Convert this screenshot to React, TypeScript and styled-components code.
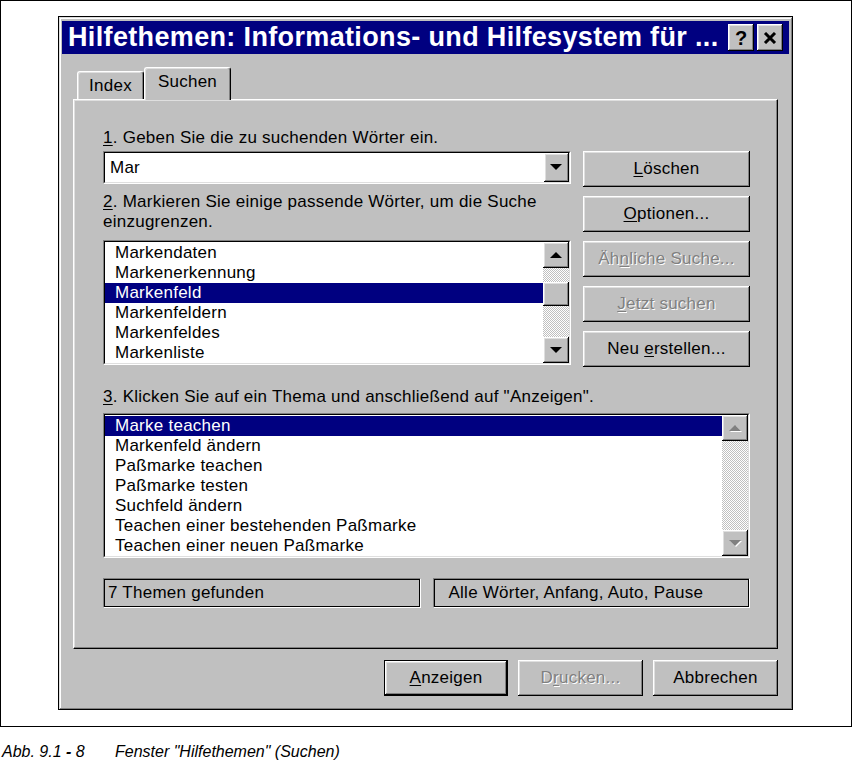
import React from "react";
import styled, { createGlobalStyle, css } from "styled-components";

const face = "#c0c0c0";

const GlobalStyle = createGlobalStyle`
  html, body {
    margin: 0;
    padding: 0;
    background: #fff;
  }
  body {
    font-family: "Liberation Sans", Arial, sans-serif;
    color: #000;
  }
`;

const raised = css`
  box-shadow: inset -1px -1px 0 #000, inset 1px 1px 0 #fff,
    inset -2px -2px 0 #808080, inset 2px 2px 0 #dfdfdf;
`;

const uiText = css`
  font-size: 17px;
  line-height: 20px;
  letter-spacing: 0.25px;
  white-space: nowrap;
`;

const Frame = styled.div`
  box-sizing: border-box;
  width: 852px;
  height: 727px;
  border: 1px solid #000;
  padding: 15px 0 0 57px;
`;

const Window = styled.div`
  box-sizing: border-box;
  width: 735px;
  height: 694px;
  background: ${face};
  border: 1px solid #000;
  box-shadow: inset 1px 1px 0 #dfdfdf, inset -1px -1px 0 #808080,
    inset 2px 2px 0 #fff;
  padding: 4px 3px 0 3px;
`;

const TitleBar = styled.div`
  height: 33px;
  background: #000080;
  color: #fff;
  display: flex;
  align-items: center;
  gap: 3px;
  padding: 0 6px;
`;

const TitleText = styled.div`
  flex: 1;
  font-size: 27px;
  font-weight: bold;
  letter-spacing: 0.35px;
  white-space: nowrap;
  overflow: hidden;
`;

const TitleButton = styled.div`
  box-sizing: border-box;
  width: 26px;
  height: 27px;
  background: ${face};
  ${raised};
  display: flex;
  align-items: center;
  justify-content: center;
  color: #000;
  font-size: 20px;
  font-weight: bold;
  padding-top: 1px;
`;

const Body = styled.div`
  padding: 13px 11px 0 11px;
`;

const TabStrip = styled.div`
  position: relative;
  z-index: 1;
  height: 32px;
  display: flex;
  align-items: flex-end;
  padding-left: 4px;
`;

const Tab = styled.div<{ $active?: boolean; $w: number }>`
  box-sizing: border-box;
  width: ${(p) => p.$w}px;
  height: ${(p) => (p.$active ? 33 : 28)}px;
  margin-bottom: ${(p) => (p.$active ? -1 : 0)}px;
  background: ${face};
  border-top: 1px solid #fff;
  border-left: 1px solid #fff;
  border-right: 1px solid #000;
  border-radius: 3px 3px 0 0;
  box-shadow: inset -1px 0 0 #808080, inset 1px 1px 0 #dfdfdf;
  padding-top: 4px;
  text-align: center;
  ${uiText};
`;

const Panel = styled.div`
  box-sizing: border-box;
  height: 550px;
  border: 1px solid;
  border-color: #fff #000 #000 #fff;
  box-shadow: inset -1px -1px 0 #808080, inset 1px 1px 0 #dfdfdf;
  padding: 28px 27px 0 29px;
`;

const TopSection = styled.div`
  display: grid;
  grid-template-columns: 468px 167px;
  column-gap: 12px;
  align-items: start;
`;

const Column = styled.div`
  display: flex;
  flex-direction: column;
`;

const ButtonColumn = styled.div`
  display: flex;
  flex-direction: column;
  gap: 9px;
  padding-top: 23px;
`;

const Label = styled.div<{ $mt?: number }>`
  ${uiText};
  white-space: normal;
  margin-top: ${(p) => p.$mt ?? 0}px;
`;

const Key = styled.span`
  text-decoration: underline;
  text-underline-offset: 2px;
`;

const Well = styled.div<{ $h: number; $mt?: number }>`
  box-sizing: border-box;
  height: ${(p) => p.$h}px;
  margin-top: ${(p) => p.$mt ?? 0}px;
  border: 1px solid;
  border-color: #808080 #fff #fff #808080;
`;

const WellInner = styled.div`
  box-sizing: border-box;
  height: 100%;
  border: 1px solid;
  border-color: #000 #dfdfdf #dfdfdf #000;
  background: #fff;
  display: flex;
`;

const ComboText = styled.div`
  flex: 1;
  padding-left: 5px;
  ${uiText};
  line-height: 29px;
`;

const DropButton = styled.div`
  box-sizing: border-box;
  width: 25px;
  background: ${face};
  ${raised};
  display: flex;
  align-items: center;
  justify-content: center;
`;

const Items = styled.div`
  flex: 1;
  padding-top: 1px;
  overflow: hidden;
`;

const Item = styled.div<{ $selected?: boolean }>`
  height: 20px;
  padding-left: 10px;
  ${uiText};
  ${(p) =>
    p.$selected &&
    css`
      background: #000080;
      color: #fff;
    `}
`;

const ScrollBar = styled.div`
  width: 26px;
  display: flex;
  flex-direction: column;
  background: repeating-conic-gradient(#c0c0c0 0 25%, #fff 0 50%) 0 0 / 2px
    2px;
`;

const ScrollButton = styled.div`
  box-sizing: border-box;
  height: 26px;
  background: ${face};
  ${raised};
  display: flex;
  align-items: center;
  justify-content: center;
`;

const Thumb = styled.div`
  box-sizing: border-box;
  height: 24px;
  margin-top: 14px;
  background: ${face};
  ${raised};
`;

const Track = styled.div`
  flex: 1;
`;

const Button = styled.div<{ $disabled?: boolean; $default?: boolean; $w?: number }>`
  box-sizing: border-box;
  height: 36px;
  width: ${(p) => (p.$w ? `${p.$w}px` : "auto")};
  background: ${face};
  ${raised};
  display: flex;
  align-items: center;
  justify-content: center;
  ${uiText};
  ${(p) =>
    p.$disabled &&
    css`
      color: #808080;
      text-shadow: 1px 1px 0 #fff;
    `}
  ${(p) =>
    p.$default &&
    css`
      border: 1px solid #000;
    `}
`;

const StatusRow = styled.div`
  display: grid;
  grid-template-columns: 1fr 1fr;
  column-gap: 12px;
  margin-top: 20px;
`;

const StatusBox = styled.div<{ $indent: number }>`
  box-sizing: border-box;
  height: 30px;
  border: 1px solid;
  border-color: #808080 #fff #fff #808080;
  box-shadow: inset 0 0 0 1px #000;
  padding-left: ${(p) => p.$indent}px;
  ${uiText};
  line-height: 28px;
`;

const Footer = styled.div`
  display: flex;
  justify-content: flex-end;
  gap: 10px;
  margin-top: 11px;
`;

const Caption = styled.div`
  display: flex;
  margin-top: 15px;
  padding-left: 2px;
  font-style: italic;
  font-size: 16px;
  line-height: 19px;
  white-space: nowrap;
`;

const CaptionNumber = styled.span`
  width: 113px;
`;

const Arrow: React.FC<{ dir: "up" | "down"; disabled?: boolean }> = ({ dir, disabled }) => {
  const pts = dir === "up" ? "0,6 12,6 6,0" : "0,0 12,0 6,6";
  return (
    <svg width="13" height="7" viewBox="0 0 13 7">
      {disabled && <polygon points={pts} fill="#fff" transform="translate(1,1)" />}
      <polygon points={pts} fill={disabled ? "#808080" : "#000"} />
    </svg>
  );
};

const CloseGlyph = () => (
  <svg width="14" height="12" viewBox="0 0 14 12">
    <path d="M2 1 L12 11 M12 1 L2 11" stroke="#000" strokeWidth="3" />
  </svg>
);

const words = [
  "Markendaten",
  "Markenerkennung",
  "Markenfeld",
  "Markenfeldern",
  "Markenfeldes",
  "Markenliste",
];

const topics = [
  "Marke teachen",
  "Markenfeld ändern",
  "Paßmarke teachen",
  "Paßmarke testen",
  "Suchfeld ändern",
  "Teachen einer bestehenden Paßmarke",
  "Teachen einer neuen Paßmarke",
];

export default function App() {
  return (
    <>
      <GlobalStyle />
      <Frame>
        <Window>
          <TitleBar>
            <TitleText>Hilfethemen: Informations- und Hilfesystem für ...</TitleText>
            <TitleButton>?</TitleButton>
            <TitleButton>
              <CloseGlyph />
            </TitleButton>
          </TitleBar>
          <Body>
            <TabStrip>
              <Tab $w={67}>Index</Tab>
              <Tab $w={87} $active>
                Suchen
              </Tab>
            </TabStrip>
            <Panel>
              <TopSection>
                <Column>
                  <Label>
                    <Key>1</Key>. Geben Sie die zu suchenden Wörter ein.
                  </Label>
                  <Well $h={33} $mt={3}>
                    <WellInner>
                      <ComboText>Mar</ComboText>
                      <DropButton>
                        <Arrow dir="down" />
                      </DropButton>
                    </WellInner>
                  </Well>
                  <Label $mt={8}>
                    <Key>2</Key>. Markieren Sie einige passende Wörter, um die Suche
                    <br />
                    einzugrenzen.
                  </Label>
                  <Well $h={125} $mt={8}>
                    <WellInner>
                      <Items>
                        {words.map((w) => (
                          <Item key={w} $selected={w === "Markenfeld"}>
                            {w}
                          </Item>
                        ))}
                      </Items>
                      <ScrollBar>
                        <ScrollButton>
                          <Arrow dir="up" />
                        </ScrollButton>
                        <Thumb />
                        <Track />
                        <ScrollButton>
                          <Arrow dir="down" />
                        </ScrollButton>
                      </ScrollBar>
                    </WellInner>
                  </Well>
                </Column>
                <ButtonColumn>
                  <Button>
                    <span>
                      <Key>L</Key>öschen
                    </span>
                  </Button>
                  <Button>
                    <span>
                      <Key>O</Key>ptionen...
                    </span>
                  </Button>
                  <Button $disabled>
                    <span>
                      Äh<Key>n</Key>liche Suche...
                    </span>
                  </Button>
                  <Button $disabled>
                    <span>
                      <Key>J</Key>etzt suchen
                    </span>
                  </Button>
                  <Button>
                    <span>
                      Neu <Key>e</Key>rstellen...
                    </span>
                  </Button>
                </ButtonColumn>
              </TopSection>
              <Label $mt={20}>
                <Key>3</Key>. Klicken Sie auf ein Thema und anschließend auf "Anzeigen".
              </Label>
              <Well $h={145} $mt={6}>
                <WellInner>
                  <Items>
                    {topics.map((t, i) => (
                      <Item key={t} $selected={i === 0}>
                        {t}
                      </Item>
                    ))}
                  </Items>
                  <ScrollBar>
                    <ScrollButton>
                      <Arrow dir="up" disabled />
                    </ScrollButton>
                    <Track />
                    <ScrollButton>
                      <Arrow dir="down" disabled />
                    </ScrollButton>
                  </ScrollBar>
                </WellInner>
              </Well>
              <StatusRow>
                <StatusBox $indent={4}>7 Themen gefunden</StatusBox>
                <StatusBox $indent={15}>Alle Wörter, Anfang, Auto, Pause</StatusBox>
              </StatusRow>
            </Panel>
            <Footer>
              <Button $default $w={124}>
                <span>
                  <Key>A</Key>nzeigen
                </span>
              </Button>
              <Button $disabled $w={125}>
                <span>
                  D<Key>r</Key>ucken...
                </span>
              </Button>
              <Button $w={125}>Abbrechen</Button>
            </Footer>
          </Body>
        </Window>
      </Frame>
      <Caption>
        <CaptionNumber>
          Abb. 9.1 <b>-</b> 8
        </CaptionNumber>
        <span>Fenster "Hilfethemen" (Suchen)</span>
      </Caption>
    </>
  );
}
